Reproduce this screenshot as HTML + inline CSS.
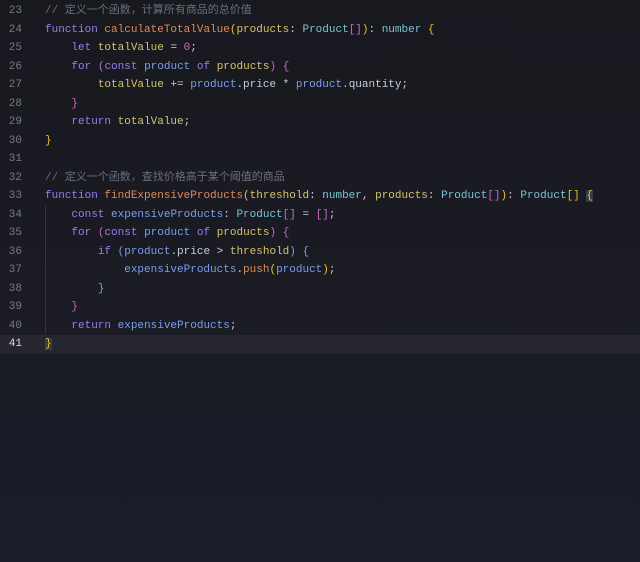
<!DOCTYPE html>
<html><head><meta charset="utf-8"><style>
html,body{margin:0;padding:0}
body{width:640px;height:562px;overflow:hidden;background:linear-gradient(180deg,#18191f 0%,#1a1b23 50%,#1b1d2b 100%);font-family:"Liberation Mono","Noto Sans CJK SC",monospace;font-size:11px;position:relative}
.l{position:absolute;left:0;width:640px;height:18.5px;line-height:18.5px;white-space:pre}
.n{position:absolute;left:0;width:22px;text-align:right;color:#777a86}
.c{position:absolute;left:45px;color:#c8ccd8}
.cur{background:#25262f}
.cur .n{color:#d8dae2}
.cm{color:#6b6e7a}
.k{color:#9b7cf0}
.f{color:#e08a58}
.p{color:#d6c36c}
.t{color:#7cc4d6}
.b{color:#c768c8}
.y{color:#e8c12e}
.v{color:#7a9ff0}
.w{color:#c8ccd8}
.num{color:#d46ac8}
.m{background:#3a3c46}
.g{position:absolute;left:45px;top:206px;width:1px;height:128px;background:#33353f}
</style></head><body>
<div class="g"></div>
<div class="l" style="top:2px"><span class="n">23</span><span class="c"><span class="cm">// 定义一个函数，计算所有商品的总价值</span></span></div>
<div class="l" style="top:20.5px"><span class="n">24</span><span class="c"><span class="k">function</span> <span class="f">calculateTotalValue</span><span class="y">(</span><span class="p">products</span>: <span class="t">Product</span><span class="b">[]</span><span class="y">)</span>: <span class="t">number</span> <span class="y">{</span></span></div>
<div class="l" style="top:39px"><span class="n">25</span><span class="c">    <span class="k">let</span> <span class="p">totalValue</span> = <span class="num">0</span>;</span></div>
<div class="l" style="top:57.5px"><span class="n">26</span><span class="c">    <span class="k">for</span> <span class="b">(</span><span class="k">const</span> <span class="v">product</span> <span class="k">of</span> <span class="p">products</span><span class="b">)</span> <span class="b">{</span></span></div>
<div class="l" style="top:76px"><span class="n">27</span><span class="c">        <span class="p">totalValue</span> += <span class="v">product</span>.price * <span class="v">product</span>.quantity;</span></div>
<div class="l" style="top:94.5px"><span class="n">28</span><span class="c">    <span class="b">}</span></span></div>
<div class="l" style="top:113px"><span class="n">29</span><span class="c">    <span class="k">return</span> <span class="p">totalValue</span>;</span></div>
<div class="l" style="top:131.5px"><span class="n">30</span><span class="c"><span class="y">}</span></span></div>
<div class="l" style="top:150px"><span class="n">31</span></div>
<div class="l" style="top:168.5px"><span class="n">32</span><span class="c"><span class="cm">// 定义一个函数，查找价格高于某个阈值的商品</span></span></div>
<div class="l" style="top:187px"><span class="n">33</span><span class="c"><span class="k">function</span> <span class="f">findExpensiveProducts</span><span class="y">(</span><span class="p">threshold</span>: <span class="t">number</span>, <span class="p">products</span>: <span class="t">Product</span><span class="b">[]</span><span class="y">)</span>: <span class="t">Product</span><span class="y">[]</span> <span class="y m">{</span></span></div>
<div class="l" style="top:205.5px"><span class="n">34</span><span class="c">    <span class="k">const</span> <span class="v">expensiveProducts</span>: <span class="t">Product</span><span class="b">[]</span> = <span class="b">[]</span>;</span></div>
<div class="l" style="top:224px"><span class="n">35</span><span class="c">    <span class="k">for</span> <span class="b">(</span><span class="k">const</span> <span class="v">product</span> <span class="k">of</span> <span class="p">products</span><span class="b">)</span> <span class="b">{</span></span></div>
<div class="l" style="top:242.5px"><span class="n">36</span><span class="c">        <span class="k">if</span> <span class="v">(product</span>.price &gt; <span class="p">threshold</span><span class="v">)</span> <span class="v">{</span></span></div>
<div class="l" style="top:261px"><span class="n">37</span><span class="c">            <span class="v">expensiveProducts</span>.<span class="f">push</span><span class="y">(</span><span class="v">product</span><span class="y">)</span>;</span></div>
<div class="l" style="top:279.5px"><span class="n">38</span><span class="c">        <span class="v">}</span></span></div>
<div class="l" style="top:298px"><span class="n">39</span><span class="c">    <span class="b">}</span></span></div>
<div class="l" style="top:316.5px"><span class="n">40</span><span class="c">    <span class="k">return</span> <span class="v">expensiveProducts</span>;</span></div>
<div class="l cur" style="top:335px"><span class="n">41</span><span class="c"><span class="y m">}</span></span></div>
</body></html>
